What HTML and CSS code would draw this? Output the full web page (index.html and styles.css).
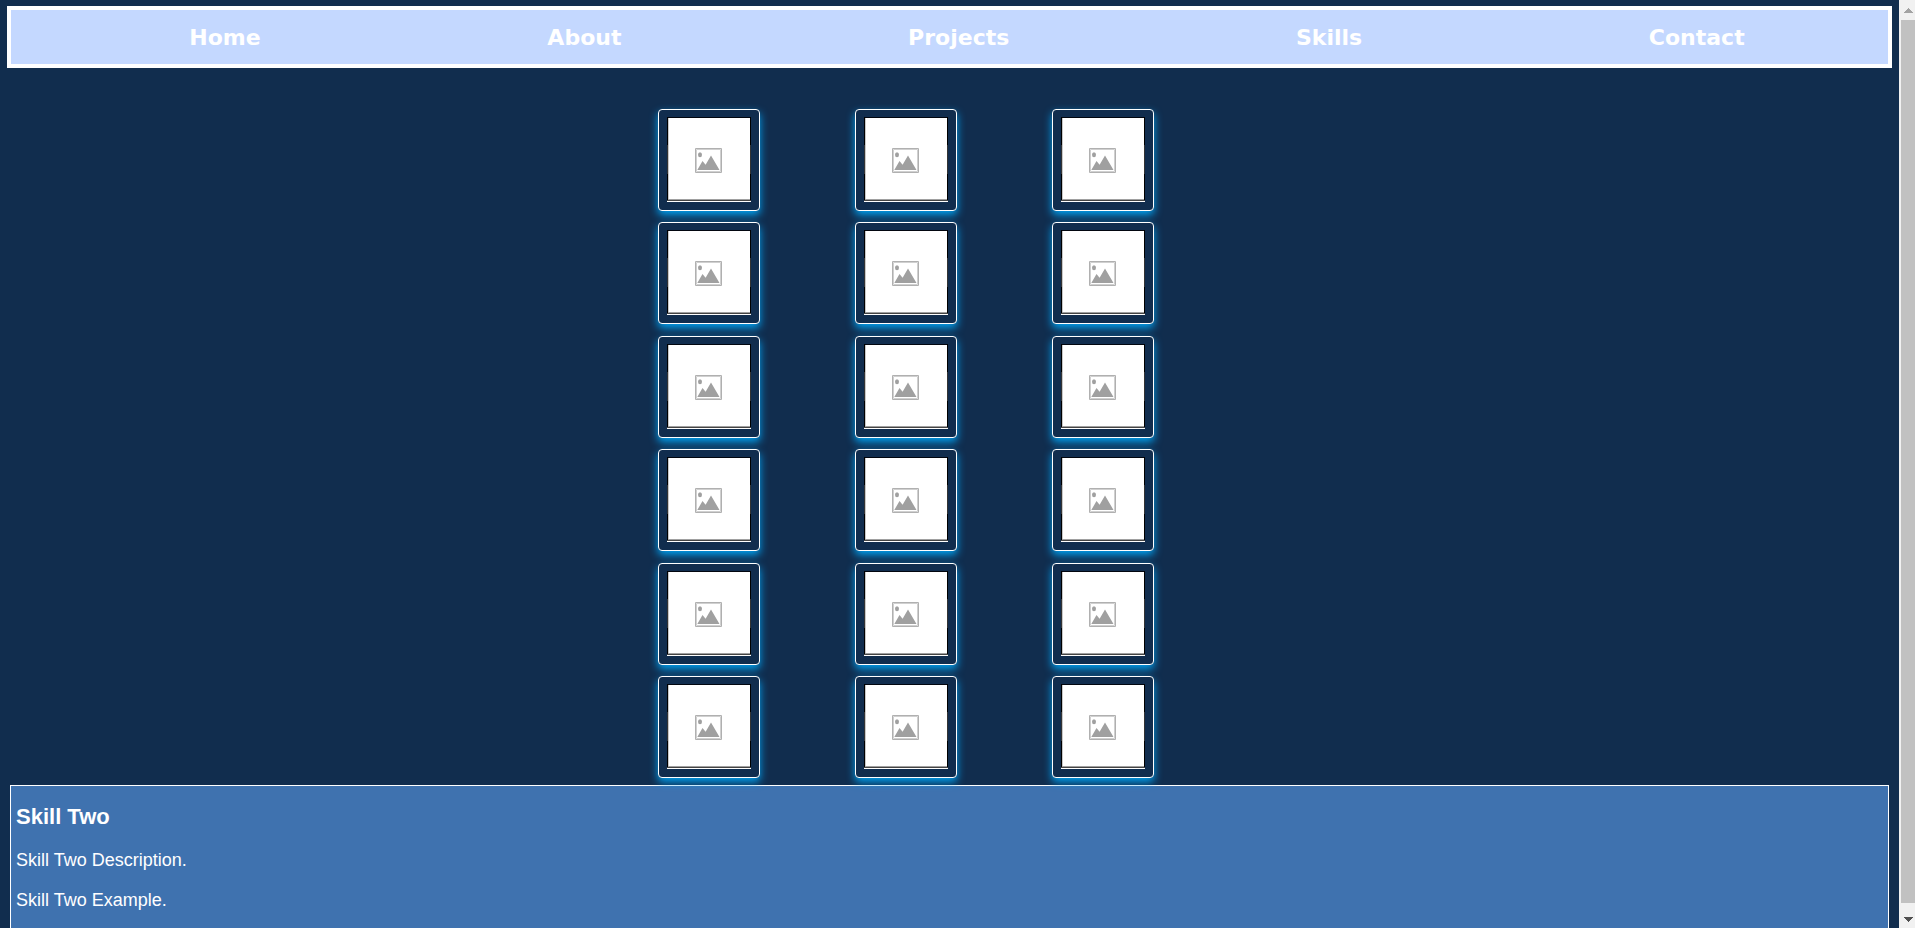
FILE: index.html
```
<!DOCTYPE html>
<html lang="en">
<head>
<meta charset="utf-8">
<title>Skills</title>
<link rel="stylesheet" href="styles.css">
</head>
<body>
<svg class="sprite" aria-hidden="true">
  <symbol id="placeholder" viewBox="0 0 84 85">
    <rect width="84" height="85" fill="#fff"/>
    <path d="M0 0H84V1H0Z" fill="#02060f"/>
    <path d="M0 0H1V28H0ZM0 57H1V84H0ZM83 0H84V28H83ZM83 57H84V84H83Z" fill="#000"/>
    <path d="M0 28H1V57H0ZM83 28H84V57H83Z" fill="#333"/>
    <path d="M1 1H2V82H1Z" fill="#c8c8c8"/>
    <path d="M1 82H83V83H1Z" fill="#a0a0a0"/>
    <path d="M0 83H84V84H0Z" fill="#444"/>
    <path d="M28.500 31.500H54.500V55.500H28.500Z" fill="none" stroke="#b0b0b0" stroke-width="1"/>
    <path d="M29.500 32.500H53.500V54.500H29.500Z" fill="#fff" stroke="#d0d0d0" stroke-width="1"/>
    <ellipse cx="33" cy="37.700" rx="2" ry="2.500" fill="#a0a0a0"/>
    <path d="M30.300 53L35.500 44L38.600 47.800L44 38.500L52.500 53Z" fill="#a0a0a0"/>
  </symbol>
</svg>
<div class="page">
  <div class="content">
    <nav class="nav">
      <a href="#home">Home</a>
      <a href="#about">About</a>
      <a href="#projects">Projects</a>
      <a href="#skills">Skills</a>
      <a href="#contact">Contact</a>
    </nav>
    <main>
      <div class="skills" id="skills">
        <button class="card" aria-label="Skill 1"><svg><use href="#placeholder"/></svg></button>
        <button class="card" aria-label="Skill 2"><svg><use href="#placeholder"/></svg></button>
        <button class="card" aria-label="Skill 3"><svg><use href="#placeholder"/></svg></button>
        <button class="card" aria-label="Skill 4"><svg><use href="#placeholder"/></svg></button>
        <button class="card" aria-label="Skill 5"><svg><use href="#placeholder"/></svg></button>
        <button class="card" aria-label="Skill 6"><svg><use href="#placeholder"/></svg></button>
        <button class="card" aria-label="Skill 7"><svg><use href="#placeholder"/></svg></button>
        <button class="card" aria-label="Skill 8"><svg><use href="#placeholder"/></svg></button>
        <button class="card" aria-label="Skill 9"><svg><use href="#placeholder"/></svg></button>
        <button class="card" aria-label="Skill 10"><svg><use href="#placeholder"/></svg></button>
        <button class="card" aria-label="Skill 11"><svg><use href="#placeholder"/></svg></button>
        <button class="card" aria-label="Skill 12"><svg><use href="#placeholder"/></svg></button>
        <button class="card" aria-label="Skill 13"><svg><use href="#placeholder"/></svg></button>
        <button class="card" aria-label="Skill 14"><svg><use href="#placeholder"/></svg></button>
        <button class="card" aria-label="Skill 15"><svg><use href="#placeholder"/></svg></button>
        <button class="card" aria-label="Skill 16"><svg><use href="#placeholder"/></svg></button>
        <button class="card" aria-label="Skill 17"><svg><use href="#placeholder"/></svg></button>
        <button class="card" aria-label="Skill 18"><svg><use href="#placeholder"/></svg></button>
      </div>
      <section class="detail">
        <h3>Skill Two</h3>
        <p>Skill Two Description.</p>
        <p>Skill Two Example.</p>
      </section>
    </main>
  </div>
  <div class="scrollbar" aria-hidden="true">
    <svg class="arrow" viewBox="0 0 16 20"><path d="M5 13H14V12H13V11H12V10H11V9H10V8H9V9H8V10H7V11H6V12H5Z" fill="#a3a3a3"/></svg>
    <div class="thumb"></div>
    <svg class="arrow" viewBox="0 0 16 20"><path d="M5 9H14V10H13V11H12V12H11V13H10V14H9V13H8V12H7V11H6V10H5Z" fill="#505050"/></svg>
  </div>
</div>
</body>
</html>
```
FILE: styles.css
```
* {
  box-sizing: border-box;
}

body {
  margin: 0;
  background: #112d4e;
  color: #fff;
  font: 18px/22px "Liberation Sans", Arial, sans-serif;
}

.sprite {
  display: none;
}

.page {
  display: flex;
  height: 100vh;
  overflow: hidden;
}

.content {
  flex: 1;
}

.nav {
  display: flex;
  justify-content: space-around;
  margin: 6px 7px 0;
  padding: 15px 0 13px 35px;
  border: 4px solid #fff;
  background: #c4d8ff;
}

.nav a {
  color: #fff;
  font: bold 22px/26px Verdana, "DejaVu Sans", sans-serif;
  text-decoration: none;
}

.skills {
  display: grid;
  grid-template-columns: repeat(3, 102px);
  justify-content: center;
  align-content: space-between;
  column-gap: 95px;
  min-height: 669px;
  margin-top: 41px;
  padding-right: 87px;
}

.card {
  padding: 7px 8px 8px;
  border: 1px solid #fff;
  border-radius: 4px;
  background: #112d4e;
  box-shadow: 0 4px 8px #00a2f2;
}

.card svg {
  display: block;
  width: 84px;
  height: 85px;
}

.detail {
  min-height: 180px;
  margin: 7px 10px 0;
  padding: 0 5px;
  border: 1px solid #fff;
  background: #3f72af;
}

.detail h3 {
  margin: 18px 0 20px;
  font-size: 22px;
  line-height: 25px;
}

.detail p {
  margin: 18px 0;
}

.scrollbar {
  display: flex;
  flex-direction: column;
  width: 16px;
  background: #f1f1f1;
}

.arrow {
  width: 16px;
  height: 20px;
}

.thumb {
  flex: 1;
  margin: 0 0 5px 2px;
  background: #c1c1c1;
}
```
